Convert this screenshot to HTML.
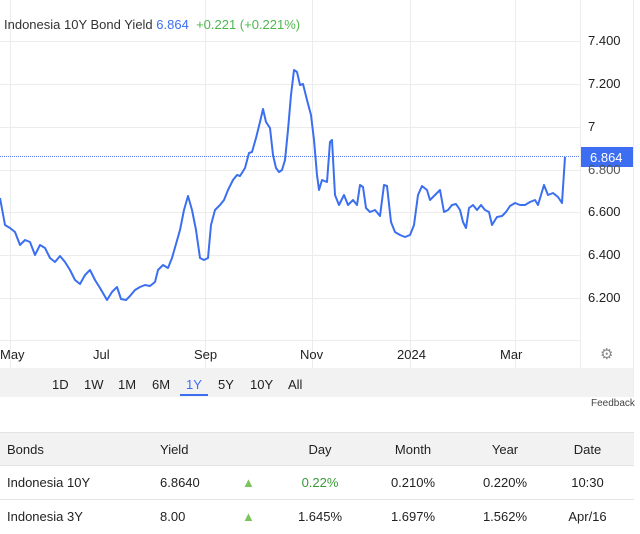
<!DOCTYPE html>
<html><head><meta charset="utf-8"><style>
body{margin:0;width:640px;height:534px;overflow:hidden;background:#fff;font-family:"Liberation Sans",sans-serif;color:#222;position:relative}
.t{position:absolute;white-space:nowrap}
table{position:absolute;left:0;top:432px;width:634px;border-collapse:collapse;font-size:13px;table-layout:fixed}
td{height:33px;padding:0;border-top:1px solid #e3e3e3}
tr.h td{background:#f2f2f2;height:32px}
</style></head><body>
<svg width="640" height="400" style="position:absolute;left:0;top:0">
<g stroke="#ececec" stroke-width="1">
<line x1="0" y1="41.5" x2="580" y2="41.5"/><line x1="0" y1="84.5" x2="580" y2="84.5"/><line x1="0" y1="127.5" x2="580" y2="127.5"/><line x1="0" y1="170.5" x2="580" y2="170.5"/><line x1="0" y1="212.5" x2="580" y2="212.5"/><line x1="0" y1="255.5" x2="580" y2="255.5"/><line x1="0" y1="298.5" x2="580" y2="298.5"/><line x1="0" y1="340.5" x2="580" y2="340.5"/>
<line x1="10.5" y1="0" x2="10.5" y2="368"/><line x1="205.5" y1="0" x2="205.5" y2="368"/><line x1="312.5" y1="0" x2="312.5" y2="368"/><line x1="410.5" y1="0" x2="410.5" y2="368"/><line x1="515.5" y1="0" x2="515.5" y2="368"/>
<line x1="580.5" y1="0" x2="580.5" y2="368"/><line x1="633.5" y1="0" x2="633.5" y2="397"/>
</g>
<rect x="0" y="368" width="633" height="29" fill="#f2f2f2"/>
<line x1="0" y1="156.5" x2="580" y2="156.5" stroke="#5b7cf0" stroke-width="1" stroke-dasharray="1,1"/>
<polyline fill="none" stroke="#3b6ff0" stroke-width="2" stroke-linejoin="round" points="0,198 5,225 10,228 15,232 20,245 25,240 30,242 35,255 40,245 45,248 50,258 55,262 60,256 65,262 70,270 75,280 80,284 85,275 90,270 95,280 100,288 107,300 112,292 117,287 121,299 126,300 130,296 135,290 140,287 145,285 150,286 155,282 158,270 163,265 168,268 172,258 176,244 180,230 184,210 188,196 192,210 196,230 200,258 204,260 208,258 211,225 215,210 220,205 224,200 228,190 233,180 237,175 240,176 245,168 249,153 252,152 256,138 260,122 263,109 266,122 270,128 273,155 276,168 279,172 282,170 285,160 288,130 291,95 294,70 297,72 300,85 303,84 307,100 311,115 314,140 317,175 319,190 322,180 327,182 330,142 332,140 335,195 339,205 344,195 348,205 353,200 357,205 360,185 363,187 366,208 370,212 375,210 380,216 384,185 387,186 391,222 395,232 400,235 405,237 410,235 414,225 418,195 422,186 427,190 430,200 435,195 440,190 444,212 448,210 452,205 456,204 460,210 463,222 466,228 469,208 473,205 477,210 481,205 485,210 489,212 492,225 497,217 502,216 506,212 510,206 515,203 520,205 525,205 530,202 535,200 538,205 541,195 544,185 548,195 553,193 558,197 562,203 565,157"/>
<rect x="581" y="147" width="52" height="20" fill="#3d6df0"/>
</svg>
<div class="t" style="left:4px;top:17px;font-size:13px;color:#333">Indonesia 10Y Bond Yield <span style="color:#3b6ff0">6.864</span> &nbsp;<span style="color:#4cb84c">+0.221 (+0.221%)</span></div>
<div class="t" style="left:588px;top:33px;font-size:13px">7.400</div>
<div class="t" style="left:588px;top:76px;font-size:13px">7.200</div>
<div class="t" style="left:588px;top:119px;font-size:13px">7</div>
<div class="t" style="left:588px;top:162px;font-size:13px;color:#555">6.800</div>
<div class="t" style="left:590px;top:150px;font-size:13px;color:#fff">6.864</div>
<div class="t" style="left:588px;top:204px;font-size:13px">6.600</div>
<div class="t" style="left:588px;top:247px;font-size:13px">6.400</div>
<div class="t" style="left:588px;top:290px;font-size:13px">6.200</div>
<div class="t" style="left:600px;top:345px;font-size:15px;color:#888">⚙</div>
<div class="t" style="left:0;top:347px;font-size:13px">May</div>
<div class="t" style="left:93px;top:347px;font-size:13px">Jul</div>
<div class="t" style="left:194px;top:347px;font-size:13px">Sep</div>
<div class="t" style="left:300px;top:347px;font-size:13px">Nov</div>
<div class="t" style="left:397px;top:347px;font-size:13px">2024</div>
<div class="t" style="left:500px;top:347px;font-size:13px">Mar</div>
<div class="t" style="left:52px;top:377px;font-size:13px">1D</div>
<div class="t" style="left:84px;top:377px;font-size:13px">1W</div>
<div class="t" style="left:118px;top:377px;font-size:13px">1M</div>
<div class="t" style="left:152px;top:377px;font-size:13px">6M</div>
<div class="t" style="left:186px;top:377px;font-size:13px;color:#3b6ff0">1Y</div>
<div style="position:absolute;left:180px;top:394px;width:28px;height:2px;background:#3b6ff0"></div>
<div class="t" style="left:218px;top:377px;font-size:13px">5Y</div>
<div class="t" style="left:250px;top:377px;font-size:13px">10Y</div>
<div class="t" style="left:288px;top:377px;font-size:13px">All</div>
<div class="t" style="left:591px;top:398px;font-size:10px;color:#444">Feedback</div>
<table>
<colgroup><col style="width:160px"><col style="width:73px"><col style="width:50px"><col style="width:74px"><col style="width:112px"><col style="width:72px"><col></colgroup>
<tr class="h"><td style="padding-left:7px">Bonds</td><td>Yield</td><td></td><td style="text-align:center">Day</td><td style="text-align:center">Month</td><td style="text-align:center">Year</td><td style="text-align:center">Date</td></tr>
<tr><td style="padding-left:7px">Indonesia 10Y</td><td>6.8640</td><td style="padding-left:9px"><span style="color:#7ac55a">▲</span></td><td style="text-align:center;color:#3a9a3a">0.22%</td><td style="text-align:center">0.210%</td><td style="text-align:center">0.220%</td><td style="text-align:center">10:30</td></tr>
<tr><td style="padding-left:7px">Indonesia 3Y</td><td>8.00</td><td style="padding-left:9px"><span style="color:#7ac55a">▲</span></td><td style="text-align:center">1.645%</td><td style="text-align:center">1.697%</td><td style="text-align:center">1.562%</td><td style="text-align:center">Apr/16</td></tr>
</table>
</body></html>
